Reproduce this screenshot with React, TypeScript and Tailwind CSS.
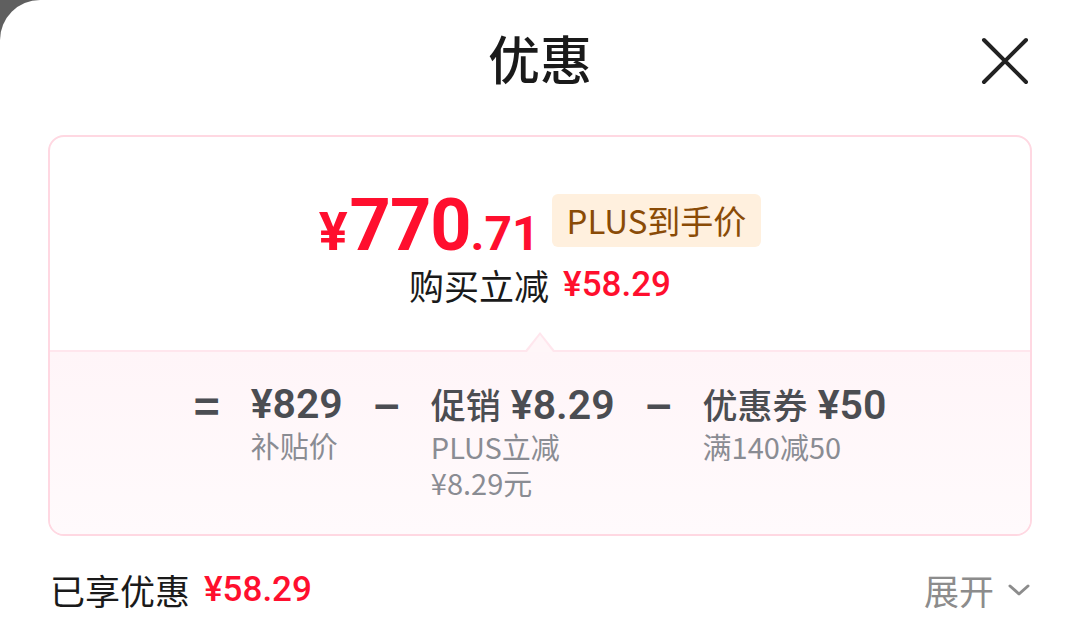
import React from 'react';

const cjk = { fontFamily: '"Noto Sans CJK SC", "Noto Sans", sans-serif' };
const num = { fontFamily: 'Roboto, "Noto Sans CJK SC", sans-serif' };

const Part: React.FC<{ title: string; price: string; sub: string; narrow?: boolean }> = ({ title, price, sub, narrow }) => (
  <div className="flex flex-col">
    <div className="flex items-baseline leading-[44px] text-[#4b4d52] font-medium">
      {title && <span className="mr-[10px] text-[35px]">{title}</span>}
      <span style={num} className="font-semibold text-[41px]">{price}</span>
    </div>
    <p className={narrow ? 'text-[29px] leading-[36px] text-[#8a8c93] mt-[1px] max-w-[140px]' : 'text-[29px] leading-[36px] text-[#8a8c93] mt-[1px]'}>
      {sub}
    </p>
  </div>
);

const Op: React.FC<{ ch: string }> = ({ ch }) => (
  <div className="text-[44px] leading-[44px] text-[#4b4d52] font-semibold w-[26px] text-center">{ch}</div>
);

export default function App() {
  return (
    <div className="w-[1065px] h-[644px] bg-[#5f5f5f] overflow-hidden" style={cjk}>
      <div className="w-[1080px] h-[644px] bg-white rounded-tl-[40px] flex flex-col">
        <div className="relative h-[124px] flex items-center justify-center pb-[8px]">
          <h1 className="text-[52px] font-medium text-[#1a1a1a] leading-none">优惠</h1>
          <button className="absolute right-[50px] top-[36px] w-[50px] h-[50px] flex items-center justify-center">
            <svg width="48" height="48" viewBox="0 0 48 48" fill="none" stroke="#222" strokeWidth="4" strokeLinecap="round">
              <path d="M3 3 L45 45 M45 3 L3 45" />
            </svg>
          </button>
        </div>

        <div className="mx-[48px] mt-[11px] h-[401px] border-2 border-[#ffd8e2] rounded-[16px] overflow-hidden flex flex-col">
          <div className="h-[213px] flex flex-col items-center pt-[53px] relative">
            <div className="flex items-end">
              <div className="flex items-baseline text-[#ff0f2e] font-bold leading-none" style={num}>
                <span className="text-[54px] mr-[2px]">¥</span>
                <span className="text-[72px] tracking-[-1px]">770</span>
                <span className="text-[48px]">.71</span>
              </div>
              <div className="ml-[12px] mb-[15px] h-[53px] px-[15px] rounded-[6px] bg-[#fff0de] text-[#8a4b06] text-[33px] flex items-center">
                PLUS到手价
              </div>
            </div>
            <div className="mt-[2px] flex items-center text-[35px] leading-[42px] text-[#1a1a1a]">
              <span>购买立减</span>
              <span className="ml-[14px] text-[#ff0f2e] font-medium" style={num}>¥58.29</span>
            </div>
            <div className="absolute left-1/2 -translate-x-1/2 bottom-[-2px] w-0 h-0 border-l-[16px] border-r-[16px] border-b-[20px] border-l-transparent border-r-transparent border-b-[#ffe6ed]" />
            <div className="absolute left-1/2 -translate-x-1/2 bottom-[-2px] w-0 h-0 border-l-[13px] border-r-[13px] border-b-[17px] border-l-transparent border-r-transparent border-b-[#fff6f8]" />
          </div>
          <div className="flex-1 border-t-2 border-[#ffe6ed] bg-gradient-to-b from-[#fff5f8] to-[#fffafc] flex justify-center pt-[30px] gap-[31px]">
            <Op ch="=" />
            <Part title="" price="¥829" sub="补贴价" />
            <Op ch="−" />
            <Part title="促销" price="¥8.29" sub="PLUS立减¥8.29元" narrow />
            <Op ch="−" />
            <Part title="优惠券" price="¥50" sub="满140减50" />
          </div>
        </div>

        <div className="flex items-center justify-between pl-[50px] pr-[50px] mt-[33px]">
          <div className="flex items-center text-[35px] leading-[42px] text-[#1a1a1a]">
            <span>已享优惠</span>
            <span className="ml-[14px] text-[#ff0f2e] font-medium" style={num}>¥58.29</span>
          </div>
          <div className="flex items-center text-[35px] leading-[42px] text-[#8c8c8c]">
            <span>展开</span>
            <svg className="ml-[14px]" width="22" height="14" viewBox="0 0 22 14" fill="none" stroke="#8c8c8c" strokeWidth="3" strokeLinecap="round" strokeLinejoin="round">
              <path d="M2 3 L11 11 L20 3" />
            </svg>
          </div>
        </div>
      </div>
    </div>
  );
}
